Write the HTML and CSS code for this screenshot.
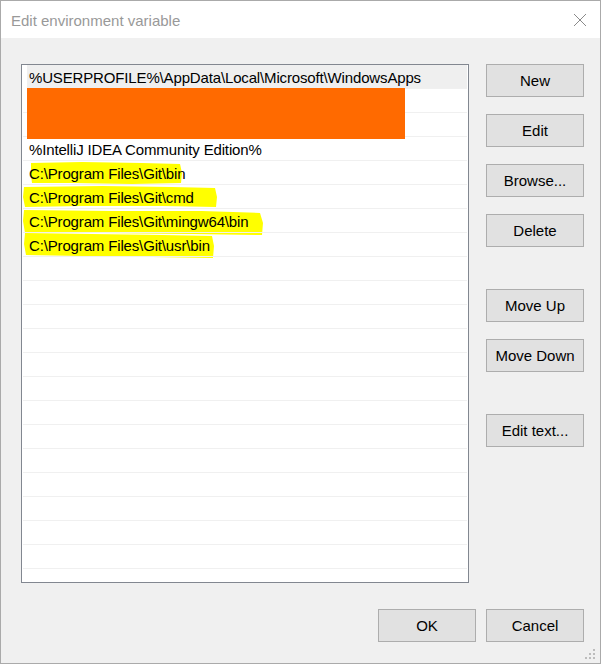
FILE: index.html
```html
<!DOCTYPE html>
<html>
<head>
<meta charset="utf-8">
<link rel="stylesheet" href="styles.css">
</head>
<body>
<div class="window">
  <div class="titlebar">
    <span class="title">Edit environment variable</span>
    <svg class="close" width="14" height="14" viewBox="0 0 14 14"><path d="M1 1 L13 13 M13 1 L1 13" stroke="#8a8a8a" stroke-width="1" fill="none"/></svg>
  </div>
  <div class="content">
    <div class="main">
      <div class="listbox">
        <svg class="marks" width="446" height="517" viewBox="0 0 446 517">
          <path d="M9 98 L60 97 L120 98 L158 99 L160 108 L159 118 L110 119 L50 118 L10 118 L9 110 Z" fill="#ffff00"/>
          <path d="M2 122 L80 121 L150 122 L193 123 L195 132 L194 142 L140 141 L60 141 L3 142 L1 132 Z" fill="#ffff00"/>
          <path d="M2 145 L90 146 L180 146 L238 148 L241 158 L240 170 L170 169 L80 168 L3 168 L1 156 Z" fill="#ffff00"/>
          <path d="M3 168 L70 169 L140 170 L190 171 L192 181 L191 193 L130 192 L60 191 L4 190 L2 179 Z" fill="#ffff00"/>
        </svg>
        <div class="redact"></div>
        <div class="row selected">%USERPROFILE%\AppData\Local\Microsoft\WindowsApps</div>
        <div class="row"></div>
        <div class="row"></div>
        <div class="row">%IntelliJ IDEA Community Edition%</div>
        <div class="row">C:\Program Files\Git\bin</div>
        <div class="row">C:\Program Files\Git\cmd</div>
        <div class="row">C:\Program Files\Git\mingw64\bin</div>
        <div class="row">C:\Program Files\Git\usr\bin</div>
        <div class="row"></div>
        <div class="row"></div>
        <div class="row"></div>
        <div class="row"></div>
        <div class="row"></div>
        <div class="row"></div>
        <div class="row"></div>
        <div class="row"></div>
        <div class="row"></div>
        <div class="row"></div>
        <div class="row"></div>
        <div class="row"></div>
        <div class="row"></div>
        <div class="row last"></div>
      </div>
      <div class="side">
        <div class="group">
          <button class="btn">New</button>
          <button class="btn">Edit</button>
          <button class="btn">Browse...</button>
          <button class="btn">Delete</button>
        </div>
        <div class="group">
          <button class="btn">Move Up</button>
          <button class="btn">Move Down</button>
        </div>
        <div class="group">
          <button class="btn">Edit text...</button>
        </div>
      </div>
    </div>
    <div class="footer">
      <button class="btn">OK</button>
      <button class="btn">Cancel</button>
    </div>
  </div>
  <div class="gripper">
    <span class="dot d1"></span>
    <span class="dot d2"></span><span class="dot d3"></span>
    <span class="dot d4"></span><span class="dot d5"></span><span class="dot d6"></span>
  </div>
</div>
</body>
</html>
```

FILE: styles.css
```css
html, body {
  margin: 0;
  padding: 0;
  background: #ffffff;
}
.window {
  position: relative;
  width: 601px;
  height: 664px;
  box-sizing: border-box;
  border: 1px solid #aaaaaa;
  display: flex;
  flex-direction: column;
  font-family: "Liberation Sans", Arial, sans-serif;
  font-size: 15px;
  color: #000;
}
.titlebar {
  height: 37px;
  background: #ffffff;
  display: flex;
  align-items: center;
  justify-content: space-between;
  padding: 0 13px 0 10px;
  flex: none;
}
.title {
  color: #999999;
  font-size: 15px;
  margin-top: 1px;
}
.close {
  display: block;
  margin-top: 1px;
}
.content {
  flex: 1;
  background: #f0f0f0;
  padding: 26px 16px 21px 20px;
  display: flex;
  flex-direction: column;
}
.main {
  display: flex;
  gap: 17px;
}
.listbox {
  position: relative;
  width: 448px;
  height: 519px;
  box-sizing: border-box;
  border: 1px solid #828790;
  background: #ffffff;
  padding: 0 1px 0 0;
  overflow: hidden;
}
.marks {
  position: absolute;
  left: 0;
  top: 0;
  z-index: 0;
}
.redact {
  position: absolute;
  left: 5px;
  top: 23px;
  width: 378px;
  height: 51px;
  background: #ff6a00;
  z-index: 2;
}
.row {
  position: relative;
  z-index: 1;
  height: 24px;
  box-sizing: border-box;
  border-bottom: 1px solid #f0f0f0;
  margin-left: 1px;
  padding: 2px 0 0 6px;
  line-height: 21px;
  letter-spacing: -0.15px;
  white-space: nowrap;
}
.row.selected {
  background: #efefef;
  margin-left: 5px;
  padding-left: 2px;
}
.side {
  display: flex;
  flex-direction: column;
  gap: 42px;
}
.group {
  display: flex;
  flex-direction: column;
  gap: 17px;
}
.btn {
  width: 98px;
  height: 33px;
  box-sizing: border-box;
  border: 1px solid #adadad;
  background: #e1e1e1;
  font-family: "Liberation Sans", Arial, sans-serif;
  font-size: 15px;
  color: #000;
  padding: 0;
  margin: 0;
}
.footer {
  margin-top: auto;
  display: flex;
  justify-content: flex-end;
  gap: 10px;
}
.gripper {
  position: absolute;
  right: 3px;
  bottom: 2px;
  width: 12px;
  height: 12px;
}
.dot {
  position: absolute;
  width: 2px;
  height: 2px;
  background: #bcbcbc;
}
.d1 { left: 8px; top: 0; }
.d2 { left: 4px; top: 4px; }
.d3 { left: 8px; top: 4px; }
.d4 { left: 0; top: 8px; }
.d5 { left: 4px; top: 8px; }
.d6 { left: 8px; top: 8px; }
```
